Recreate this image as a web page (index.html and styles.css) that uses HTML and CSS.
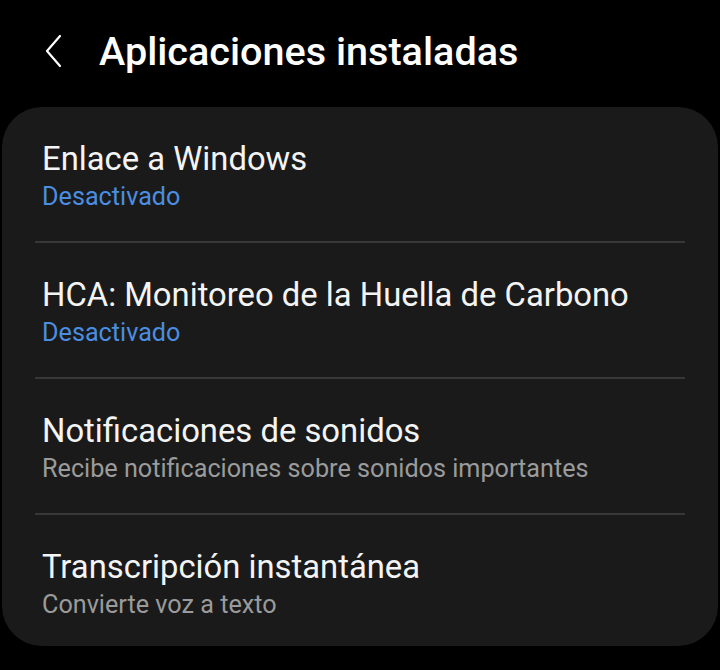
FILE: index.html
```html
<!DOCTYPE html>
<html lang="es">
<head>
<meta charset="utf-8">
<link rel="stylesheet" href="styles.css">
</head>
<body>
<header class="topbar">
  <svg class="back" width="20" height="34" viewBox="0 0 20 34"><path d="M16 2 L3 17 L16 32" fill="none" stroke="#ffffff" stroke-width="2.2" stroke-linecap="round" stroke-linejoin="round"/></svg>
  <h1 class="title">Aplicaciones instaladas</h1>
</header>
<main class="card">
  <div class="row">
    <div class="row-title">Enlace a Windows</div>
    <div class="row-sub accent">Desactivado</div>
  </div>
  <div class="divider"></div>
  <div class="row">
    <div class="row-title">HCA: Monitoreo de la Huella de Carbono</div>
    <div class="row-sub accent">Desactivado</div>
  </div>
  <div class="divider"></div>
  <div class="row">
    <div class="row-title">Notificaciones de sonidos</div>
    <div class="row-sub">Recibe notificaciones sobre sonidos importantes</div>
  </div>
  <div class="divider"></div>
  <div class="row last">
    <div class="row-title">Transcripción instantánea</div>
    <div class="row-sub">Convierte voz a texto</div>
  </div>
</main>
</body>
</html>
```
FILE: styles.css
```css
html, body {
  margin: 0;
  padding: 0;
  background: #000;
}
body {
  width: 720px;
  height: 670px;
  overflow: hidden;
  font-family: Roboto, "Noto Sans", sans-serif;
  color: #fff;
}
.topbar {
  height: 107px;
  display: flex;
  align-items: flex-start;
  padding-left: 44px;
  box-sizing: border-box;
}
.back {
  margin-top: 34px;
  flex: none;
}
.title {
  margin: 0 0 0 35px;
  padding-top: 26px;
  font-size: 39.6px;
  line-height: 52px;
  font-weight: 500;
  letter-spacing: 0;
}
.card {
  margin: 0 2px;
  background: #1a1a1a;
  border-radius: 40px;
  display: flex;
  flex-direction: column;
}
.row {
  padding: 33px 40px 29px;
}
.row.last {
  padding-bottom: 26px;
}
.row-title {
  font-size: 32.8px;
  line-height: 38px;
  color: #f4f4f4;
}
.row-sub {
  margin-top: 4px;
  font-size: 25.2px;
  line-height: 30px;
  color: #9b9b9b;
}
.row-sub.accent {
  color: #4b8ee0;
}
.divider {
  height: 2px;
  margin: 0 33px;
  background: #383838;
}
```
